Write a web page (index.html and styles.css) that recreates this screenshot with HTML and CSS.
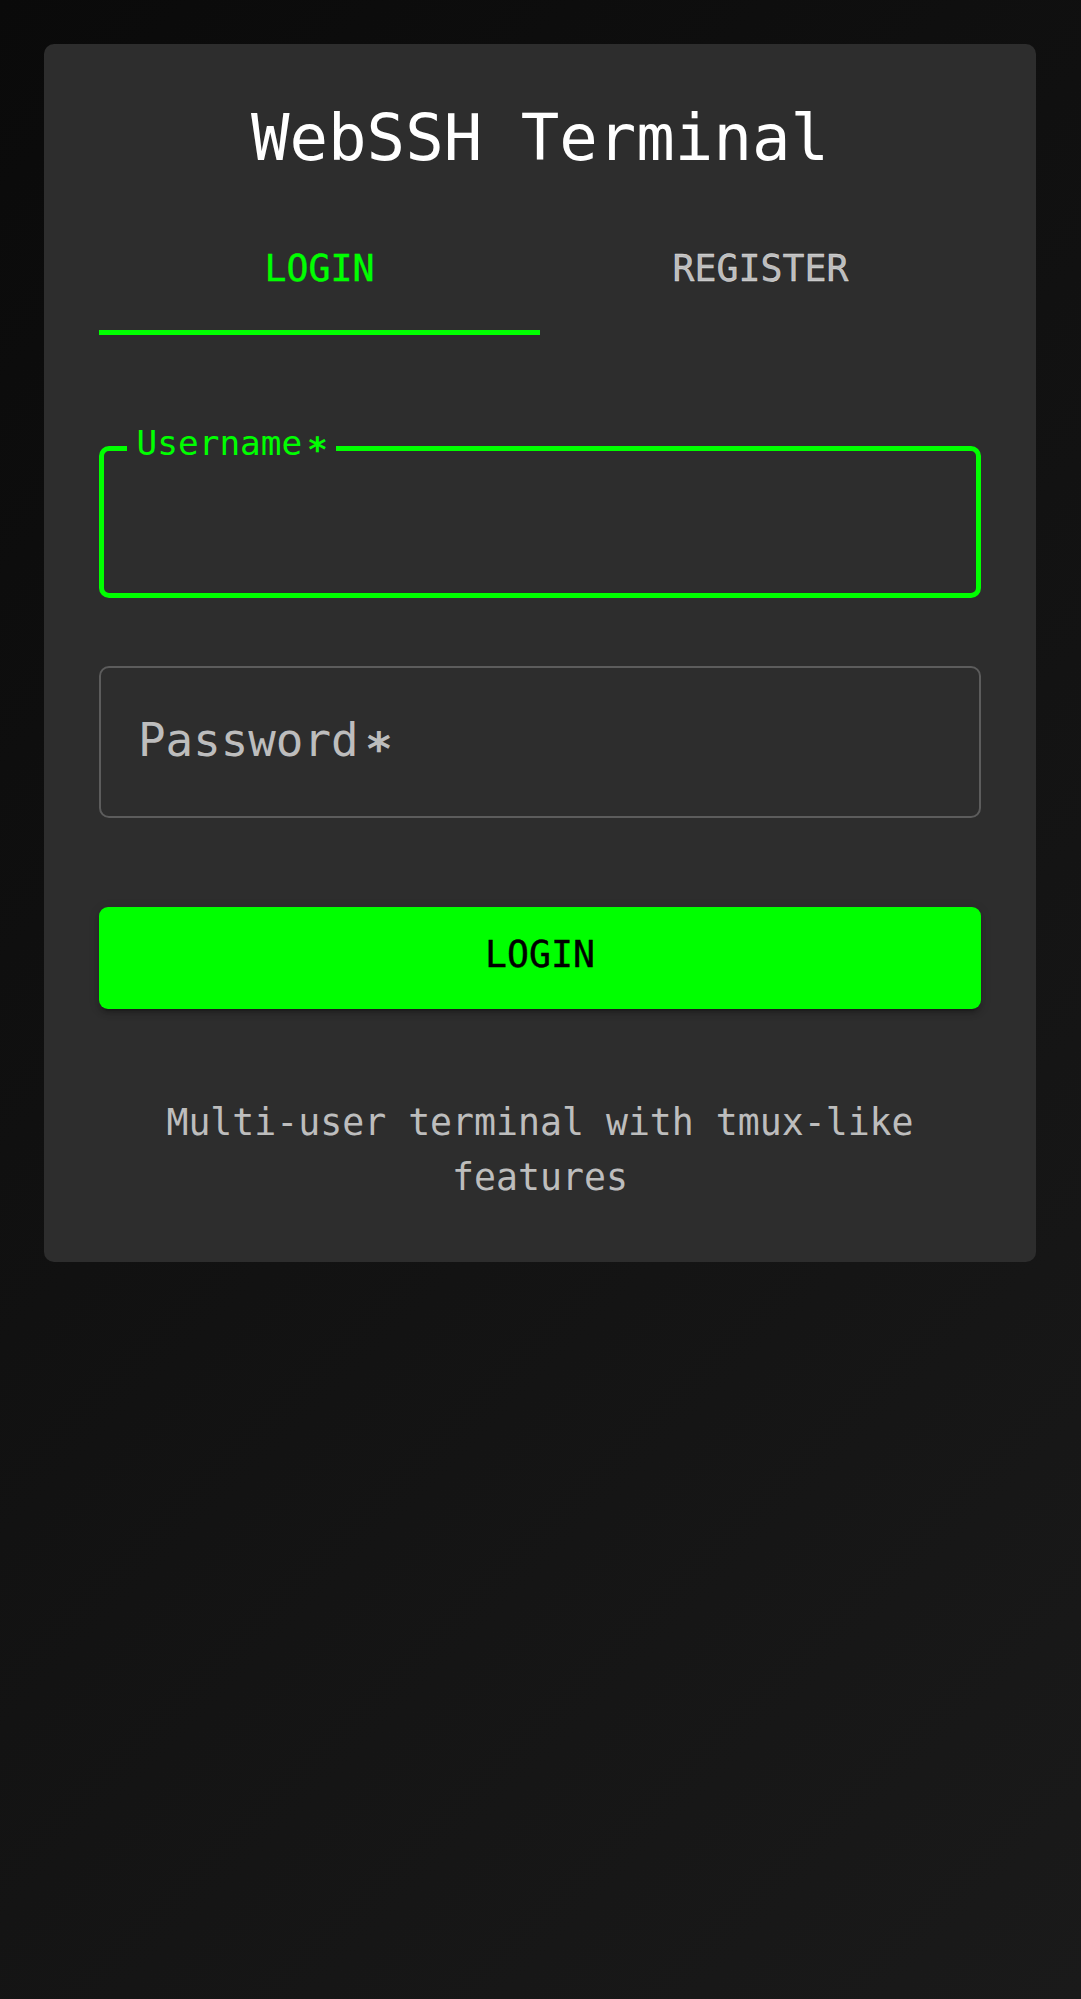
FILE: index.html
```html
<!DOCTYPE html>
<html lang="en">
<head>
<meta charset="utf-8">
<title>WebSSH Terminal</title>
<link rel="stylesheet" href="styles.css">
</head>
<body>
<main class="page">
  <section class="card">
    <h1 class="title">WebSSH Terminal</h1>
    <div class="tabs">
      <button class="tab tab-active" type="button">LOGIN</button>
      <button class="tab" type="button">REGISTER</button>
    </div>
    <form class="form">
      <div class="field field-focused">
        <input class="field-input" type="text" aria-label="Username">
        <label class="field-label field-label-shrunk">Username<span class="req">∗</span></label>
      </div>
      <div class="field field-second">
        <input class="field-input" type="password" aria-label="Password">
        <label class="field-label field-label-rest">Password<span class="req">∗</span></label>
      </div>
      <button class="submit" type="button">LOGIN</button>
    </form>
    <p class="footer">Multi-user terminal with tmux-like features</p>
  </section>
</main>
</body>
</html>
```

FILE: styles.css
```css
* { box-sizing: border-box; }

html, body {
  margin: 0;
  padding: 0;
}

body {
  min-height: 1999px;
  background: linear-gradient(135deg, #0a0a0a 0%, #1a1a1a 100%);
  font-family: "DejaVu Sans Mono", "Liberation Mono", monospace;
  color: #ffffff;
}

.page {
  padding: 44px 45px 0 44px;
}

.card {
  width: 992px;
  background: #2d2d2d;
  border-radius: 10px;
  padding: 54px 55px 56px 55px;
}

.title {
  margin: 0;
  font-size: 64px;
  font-weight: normal;
  line-height: 80px;
  text-align: center;
  color: #ffffff;
}

.tabs {
  margin-top: 30px;
  display: flex;
}

.tab {
  flex: 1 1 0;
  background: none;
  border: 0;
  border-bottom: 5px solid transparent;
  padding: 39px 0 39px;
  margin: 0;
  font-family: inherit;
  font-size: 36.5px;
  line-height: 44px;
  color: rgba(255, 255, 255, 0.7);
  -webkit-text-stroke: 0.4px currentColor;
  cursor: pointer;
}

.tab-active {
  color: #00ff00;
  border-bottom-color: #00ff00;
}

.form {
  display: flex;
  flex-direction: column;
  margin-top: 111px;
}

.field {
  position: relative;
  height: 152px;
}

.field-second {
  margin-top: 68px;
}

.field-input {
  display: block;
  width: 100%;
  height: 152px;
  margin: 0;
  padding: 0 37px;
  background: transparent;
  border: 2px solid #5c5c5c;
  border-radius: 10px;
  outline: none;
  font-family: inherit;
  font-size: 45.8px;
  color: #ffffff;
}

.field-focused .field-input {
  border: 5px solid #00ff00;
}

.field-label {
  position: absolute;
  white-space: nowrap;
  pointer-events: none;
}

.req {
  font-weight: bold;
  margin-left: 0.14em;
}

.field-label-shrunk {
  left: 27.6px;
  top: -20px;
  padding: 0 8px 0 10px;
  background: #2d2d2d;
  font-size: 34.4px;
  line-height: 34px;
  color: #00ff00;
}

.field-label-rest {
  left: 39px;
  top: 51px;
  font-size: 45.8px;
  line-height: 46px;
  color: rgba(255, 255, 255, 0.7);
}

.submit {
  margin-top: 89px;
  height: 102px;
  padding: 26px 0 32px;
  border: 0;
  border-radius: 9px;
  background: #00ff00;
  color: #000000;
  font-family: inherit;
  font-size: 36.5px;
  line-height: 44px;
  -webkit-text-stroke: 0.4px currentColor;
  box-shadow: 0 7px 2px -5px rgba(0, 0, 0, 0.2), 0 5px 5px 0 rgba(0, 0, 0, 0.14), 0 2px 12px 0 rgba(0, 0, 0, 0.12);
  cursor: pointer;
}

.footer {
  margin: 87px 0 0;
  font-size: 36.5px;
  line-height: 54.75px;
  text-align: center;
  color: rgba(255, 255, 255, 0.7);
}
```
